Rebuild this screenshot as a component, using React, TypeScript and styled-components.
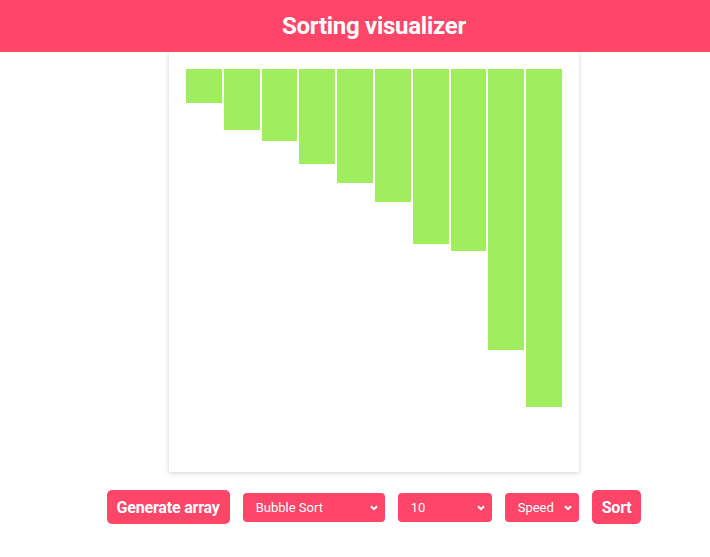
import React from "react";
import styled, { createGlobalStyle } from "styled-components";

const Global = createGlobalStyle`
  html, body { margin: 0; padding: 0; background: #fff; }
  body { font-family: Roboto, "Liberation Sans", sans-serif; }
`;

const Page = styled.div`
  width: 100%;
  display: flex;
  flex-direction: column;
`;

const Header = styled.header`
  height: 52px;
  padding-left: 38px;
  background: #ff4669;
  color: #fff;
  display: flex;
  align-items: center;
  justify-content: center;
  position: relative;
  z-index: 1;
`;

const Title = styled.h1`
  margin: 0;
  font-size: 24px;
  font-weight: 700;
  letter-spacing: -0.28px;
  font-family: Roboto, sans-serif;
`;

const Main = styled.main`
  padding-left: 38px;
  display: flex;
  flex-direction: column;
  align-items: center;
`;

const Card = styled.div`
  width: 410px;
  height: 420px;
  box-sizing: border-box;
  padding: 17px;
  background: #fff;
  box-shadow: 0 1px 5px rgba(0, 0, 0, 0.18);
  display: flex;
  align-items: flex-start;
  gap: 2px;
`;

const Bar = styled.div<{ $h: number }>`
  flex: 1;
  height: ${(p) => p.$h}px;
  background: #a0ee5e;
`;

const Controls = styled.div`
  margin-top: 18px;
  display: flex;
  align-items: center;
  gap: 13px;
`;

const Button = styled.button`
  height: 34px;
  padding: 0 10px;
  border: none;
  border-radius: 5px;
  background: #ff4669;
  color: #fff;
  font-family: Roboto, sans-serif;
  font-weight: 700;
  font-size: 16px;
  letter-spacing: -0.2px;
`;

const SelectWrap = styled.div<{ $w: number }>`
  position: relative;
  width: ${(p) => p.$w}px;
  height: 29px;
`;

const Select = styled.select`
  appearance: none;
  width: 100%;
  height: 100%;
  border: none;
  border-radius: 4px;
  background: #ff4669;
  color: #fff;
  font-family: Roboto, sans-serif;
  font-size: 13px;
  padding: 0 0 0 13px;
  outline: none;
`;

const Chevron = styled.svg`
  position: absolute;
  right: 7px;
  top: 12px;
  pointer-events: none;
`;

const heights = [34, 61, 72, 95, 114, 133, 175, 182, 281, 338];

function Sel({ w, options }: { w: number; options: string[] }) {
  return (
    <SelectWrap $w={w}>
      <Select defaultValue={options[0]}>
        {options.map((o) => (
          <option key={o}>{o}</option>
        ))}
      </Select>
      <Chevron width="8" height="6" viewBox="0 0 8 6">
        <path d="M1 1.2 L4 4.2 L7 1.2" stroke="#fff" strokeWidth="2" fill="none" />
      </Chevron>
    </SelectWrap>
  );
}

export default function App() {
  return (
    <Page>
      <Global />
      <Header>
        <Title>Sorting visualizer</Title>
      </Header>
      <Main>
        <Card>
          {heights.map((h, i) => (
            <Bar key={i} $h={h} />
          ))}
        </Card>
        <Controls>
          <Button>Generate array</Button>
          <Sel w={142} options={["Bubble Sort", "Selection Sort", "Insertion Sort", "Merge Sort", "Quick Sort"]} />
          <Sel w={94} options={["10", "20", "50", "100"]} />
          <Sel w={74} options={["Speed", "Slow", "Medium", "Fast"]} />
          <Button>Sort</Button>
        </Controls>
      </Main>
    </Page>
  );
}
